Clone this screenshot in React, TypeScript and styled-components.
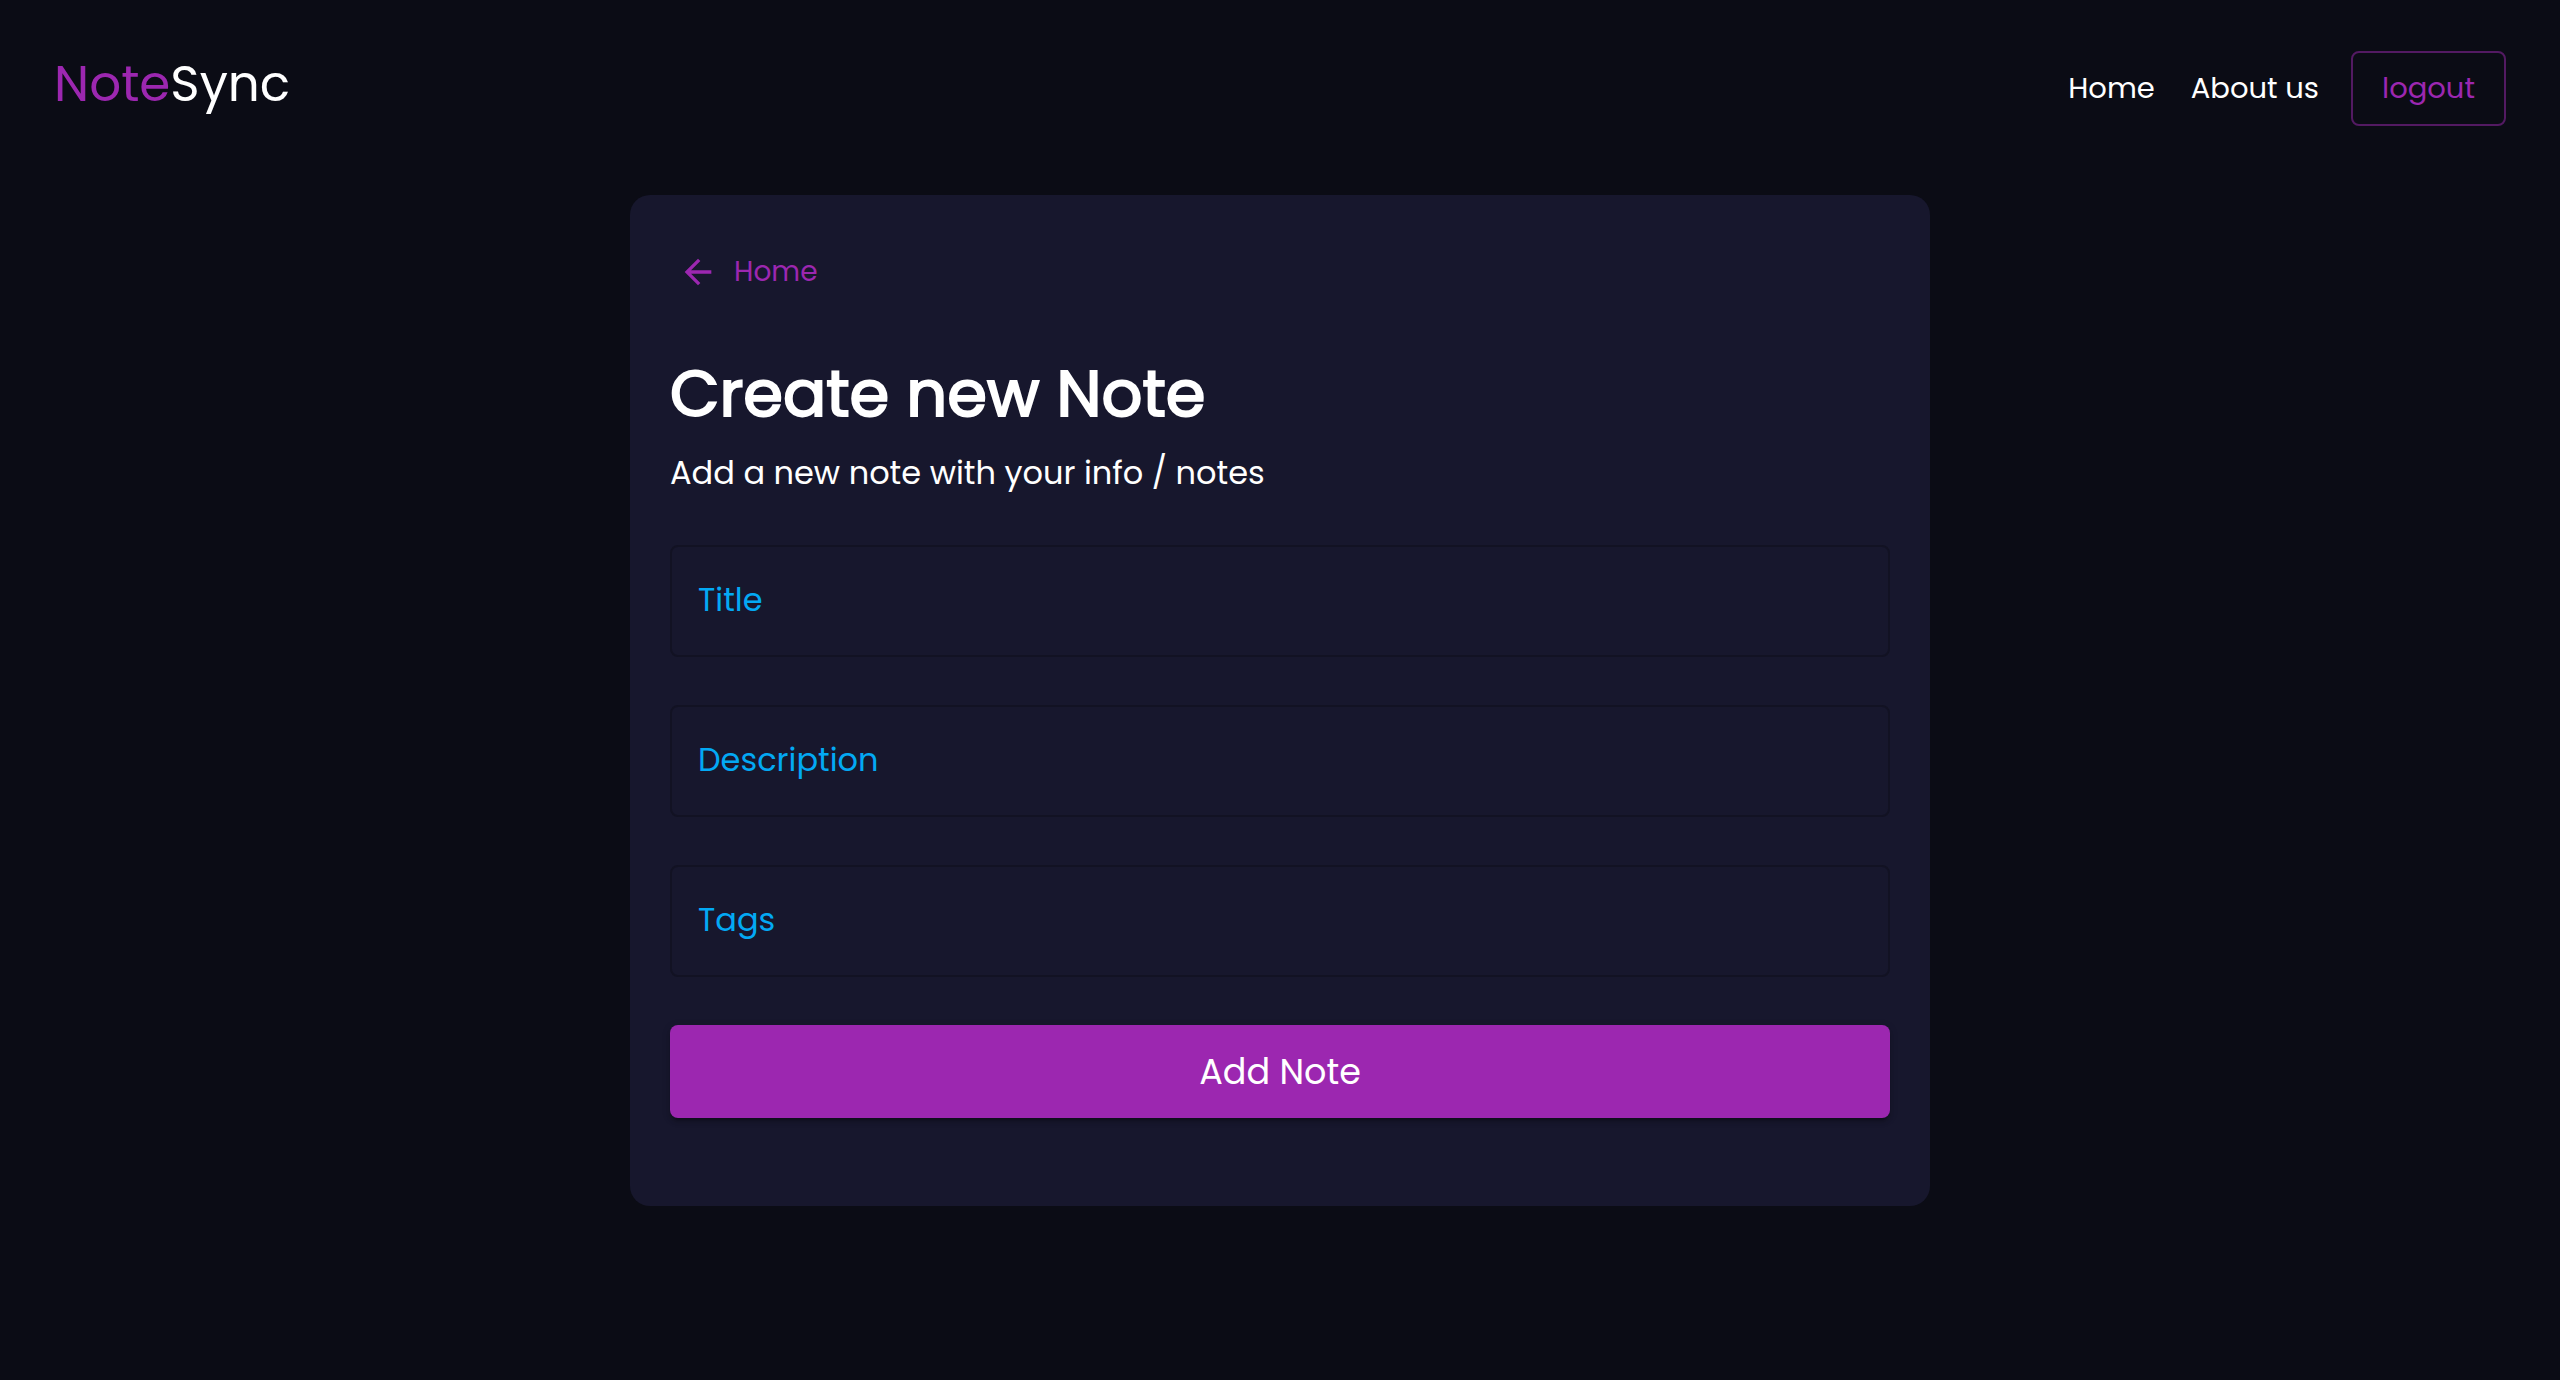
import React from "react";
import styled, { createGlobalStyle } from "styled-components";

const purple = "#9c27b0";
const surface = "#17172d";

const GlobalStyle = createGlobalStyle`
  *, *::before, *::after { box-sizing: border-box; }
  html { background: #0b0c15; }
  body {
    margin: 0;
    min-height: 100vh;
    color: #fff;
    font-family: Poppins, Inter, "Open Sans", sans-serif;
    -webkit-font-smoothing: antialiased;
  }
`;

const Header = styled.header`
  display: flex;
  align-items: flex-start;
  justify-content: space-between;
  padding: 51px 54px 69px;
`;

const Logo = styled.a`
  color: #fff;
  font-size: 50px;
  line-height: 66px;
  text-decoration: none;
`;

const Accent = styled.span`
  color: ${purple};
`;

const Nav = styled.nav`
  display: flex;
  align-items: center;
  gap: 32px;
`;

const NavLinks = styled.div`
  display: flex;
  gap: 36px;
`;

const NavLink = styled.a`
  color: #fff;
  font-size: 29px;
  line-height: 47px;
  text-decoration: none;
`;

const LogoutButton = styled.button`
  border: 2px solid rgba(156, 39, 176, 0.5);
  border-radius: 8px;
  padding: 12px 29px;
  background: transparent;
  color: ${purple};
  font: inherit;
  font-size: 29px;
  line-height: 47px;
  cursor: pointer;
`;

const Card = styled.main`
  width: calc(100% - 80px);
  max-width: 1300px;
  margin: 0 auto;
  padding: 48px 40px 88px;
  border-radius: 20px;
  background: ${surface};
`;

const BackLink = styled.a`
  display: flex;
  align-items: center;
  gap: 16px;
  width: fit-content;
  padding: 6px 8px;
  color: ${purple};
  font-size: 28px;
  line-height: 46px;
  text-decoration: none;
`;

const ArrowIcon = styled.svg`
  width: 40px;
  height: 40px;
  fill: currentColor;
`;

const Heading = styled.h1`
  margin: 46px 0 0;
  font-size: 64px;
  line-height: 94px;
  font-weight: 400;
  -webkit-text-stroke: 2px currentColor;
`;

const Subtitle = styled.p`
  margin: 8px 0 48px;
  font-size: 32px;
  line-height: 48px;
`;

const Form = styled.form`
  display: flex;
  flex-direction: column;
  gap: 48px;
`;

const Field = styled.div`
  position: relative;
`;

const Label = styled.label`
  position: absolute;
  top: 32px;
  left: 28px;
  color: #03a9f4;
  font-size: 32px;
  line-height: 46px;
  pointer-events: none;
`;

const TextInput = styled.input`
  display: block;
  width: 100%;
  height: 112px;
  padding: 32px 28px;
  border: 2px solid #121223;
  border-radius: 8px;
  background: transparent;
  color: #fff;
  font: inherit;
  font-size: 32px;

  &:focus {
    outline: none;
    border-color: ${purple};
  }
  &:focus + ${Label}, &:not(:placeholder-shown) + ${Label} {
    top: -16px;
    background: ${surface};
    font-size: 24px;
    line-height: 32px;
  }
`;

const SubmitButton = styled.button`
  border: 0;
  border-radius: 8px;
  padding: 16px 32px;
  background: ${purple};
  box-shadow: 0 6px 2px -4px rgba(0, 0, 0, 0.2), 0 4px 4px rgba(0, 0, 0, 0.14),
    0 2px 10px rgba(0, 0, 0, 0.12);
  color: #fff;
  font: inherit;
  font-size: 35px;
  line-height: 61px;
  cursor: pointer;
`;

const fields = [
  { id: "title", label: "Title" },
  { id: "description", label: "Description" },
  { id: "tags", label: "Tags" },
];

export default function App() {
  return (
    <>
      <GlobalStyle />
      <Header>
        <Logo href="#">
          <Accent>Note</Accent>Sync
        </Logo>
        <Nav>
          <NavLinks>
            <NavLink href="#">Home</NavLink>
            <NavLink href="#about">About us</NavLink>
          </NavLinks>
          <LogoutButton type="button">logout</LogoutButton>
        </Nav>
      </Header>
      <Card>
        <BackLink href="#">
          <ArrowIcon viewBox="0 0 24 24" aria-hidden="true">
            <path d="M20 11H7.83l5.59-5.59L12 4l-8 8 8 8 1.41-1.41L7.83 13H20v-2z" />
          </ArrowIcon>
          Home
        </BackLink>
        <Heading>Create new Note</Heading>
        <Subtitle>Add a new note with your info / notes</Subtitle>
        <Form onSubmit={(event) => event.preventDefault()}>
          {fields.map(({ id, label }) => (
            <Field key={id}>
              <TextInput id={id} name={id} placeholder=" " />
              <Label htmlFor={id}>{label}</Label>
            </Field>
          ))}
          <SubmitButton type="submit">Add Note</SubmitButton>
        </Form>
      </Card>
    </>
  );
}
